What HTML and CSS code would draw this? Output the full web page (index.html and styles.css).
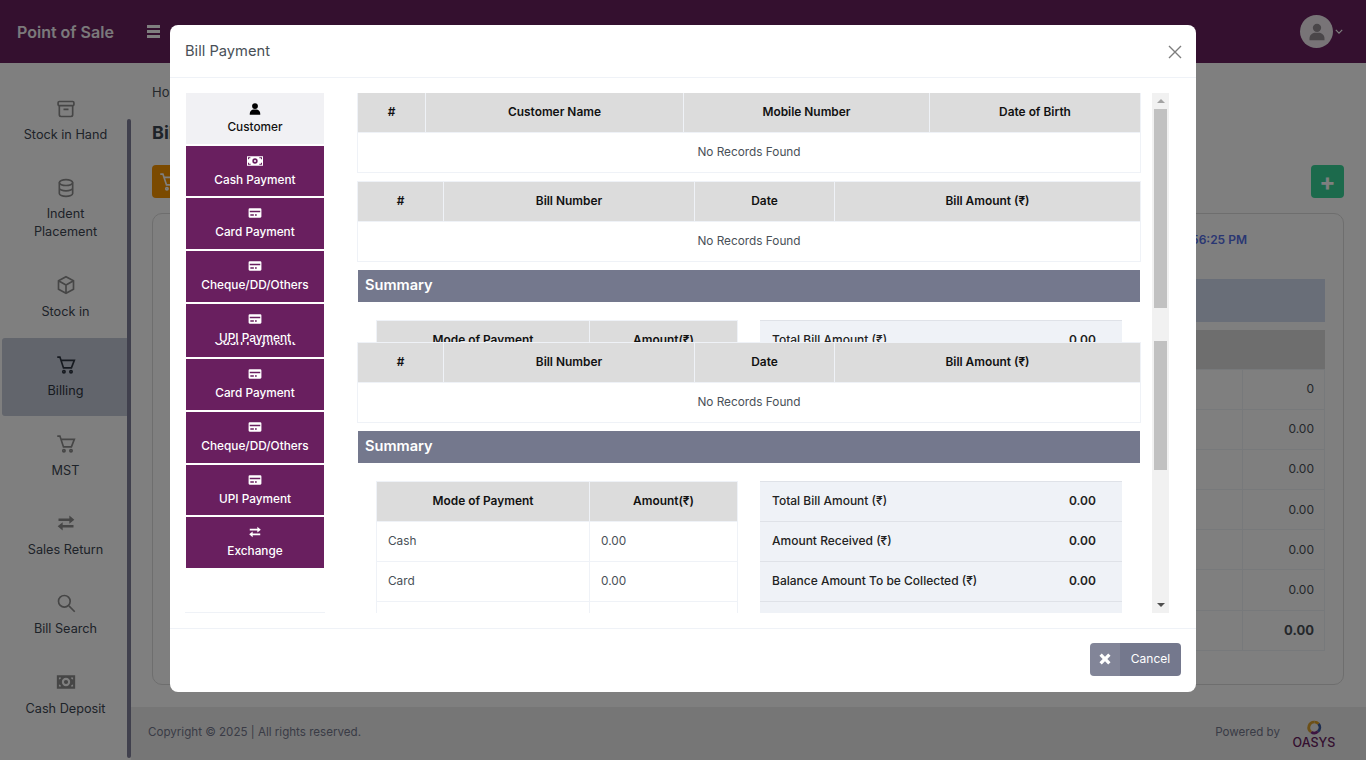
FILE: index.html
```html
<!DOCTYPE html>
<html lang="en">
<head>
  <meta charset="UTF-8">
  <meta name="viewport" content="width=device-width, initial-scale=1.0">
  <title>Point of Sale</title>
  <link rel="stylesheet" href="styles.css">
</head>
<body>
  <svg class="sprite" aria-hidden="true">
    <symbol id="i-user" viewBox="0 0 24 24"><circle cx="12" cy="7" r="5"/><path d="M3 22v-2c0-4 3-7 7-7h4c4 0 7 3 7 7v2z"/></symbol>
    <symbol id="i-cash" viewBox="0 0 24 18"><path fill-rule="evenodd" d="M0 2h24v14H0zM12 5a4 4 0 1 0 0 8 4 4 0 0 0 0-8zM12 7.5a1.500 1.500 0 1 1 0 3 1.500 1.500 0 0 1 0-3zM1.500 3.500v3H3V5h2V3.500zM22.500 3.500h-4V5h2.500v1.500h1.500zM1.500 14.500h4V13H3v-1.500H1.500zM22.500 14.500v-3H21V13h-2.500v1.500z"/></symbol>
    <symbol id="i-card" viewBox="0 0 24 24"><path fill-rule="evenodd" d="M3 4h18a2 2 0 0 1 2 2v12a2 2 0 0 1-2 2H3a2 2 0 0 1-2-2V6a2 2 0 0 1 2-2zm0 4v2.500h18V8zm1 6v2.500h6V14zm8 0v2.500h3V14z"/></symbol>
    <symbol id="i-swap" viewBox="0 0 24 24"><path d="M16 3l6 5-6 5v-3.500H3v-3h13zM8 11v3.500h13v3H8V21l-6-5z"/></symbol>
    <symbol id="i-x" viewBox="0 0 24 24"><path d="M6.500 2.500L12 8l5.500-5.500 4 4L16 12l5.500 5.500-4 4L12 16l-5.500 5.500-4-4L8 12 2.500 6.500z"/></symbol>
    <symbol id="i-archive" viewBox="0 0 24 24"><rect x="2.500" y="3" width="19" height="5" rx="1.500"/><path d="M4 8v11a2 2 0 0 0 2 2h12a2 2 0 0 0 2-2V8M9 12.500h6"/></symbol>
    <symbol id="i-db" viewBox="0 0 24 24"><ellipse cx="12" cy="5.500" rx="8" ry="3.500"/><path d="M4 5.500v13c0 1.900 3.600 3.500 8 3.500s8-1.600 8-3.500v-13M4 12c0 1.900 3.600 3.500 8 3.500s8-1.600 8-3.500"/></symbol>
    <symbol id="i-box" viewBox="0 0 24 24"><path d="M12 2l9 5v10l-9 5-9-5V7zM3 7l9 5 9-5M12 12v10"/></symbol>
    <symbol id="i-cart" viewBox="0 0 24 24"><path d="M1.500 2.500h3.200L9 15.500h9.500L22 6.500H6.200"/><circle cx="9.500" cy="20" r="1.400" class="solid"/><circle cx="18" cy="20" r="1.400" class="solid"/></symbol>
    <symbol id="i-search" viewBox="0 0 24 24"><circle cx="10" cy="10" r="7"/><path d="M15.500 15.500l7 7"/></symbol>
    <symbol id="i-note" viewBox="0 0 24 24"><path fill-rule="evenodd" d="M1 4h22v16H1zm11 3a5 5 0 1 0 0 10 5 5 0 0 0 0-10zm0 2.500a2.500 2.500 0 1 1 0 5 2.500 2.500 0 0 1 0-5zM3.500 6.500V9a2.500 2.500 0 0 0 2.500-2.500zm17 0H18A2.500 2.500 0 0 0 20.500 9zm-17 11H6A2.500 2.500 0 0 0 3.500 15zm17 0V15a2.500 2.500 0 0 0-2.500 2.500z"/></symbol>
  </svg>

  <header class="topbar">
    <div class="brand">Point of Sale</div>
    <div class="burger"><span></span><span></span><span></span></div>
    <div class="account">
      <div class="avatar"><svg class="avatar-icon"><use href="#i-user"/></svg></div>
      <svg class="chevron" viewBox="0 0 10 6"><path d="M1 1l4 4 4-4"/></svg>
    </div>
  </header>

  <div class="page">
    <nav class="sidebar">
      <a class="nav-item"><svg class="line-icon"><use href="#i-archive"/></svg><span>Stock in Hand</span></a>
      <a class="nav-item"><svg class="line-icon"><use href="#i-db"/></svg><span>Indent<br>Placement</span></a>
      <a class="nav-item"><svg class="line-icon"><use href="#i-box"/></svg><span>Stock in</span></a>
      <a class="nav-item active"><svg class="line-icon"><use href="#i-cart"/></svg><span>Billing</span></a>
      <a class="nav-item"><svg class="line-icon"><use href="#i-cart"/></svg><span>MST</span></a>
      <a class="nav-item"><svg class="fill-icon"><use href="#i-swap"/></svg><span>Sales Return</span></a>
      <a class="nav-item"><svg class="line-icon"><use href="#i-search"/></svg><span>Bill Search</span></a>
      <a class="nav-item"><svg class="fill-icon"><use href="#i-note"/></svg><span>Cash Deposit</span></a>
      <div class="side-thumb"></div>
    </nav>

    <div class="main">
      <div class="content">
        <div class="crumb">Home</div>
        <h1 class="page-title">Billing</h1>
        <div class="actions">
          <button class="btn-orange"><svg class="line-icon"><use href="#i-cart"/></svg></button>
          <button class="btn-green">+</button>
        </div>
        <div class="card">
          <div class="clock">12:56:25 PM</div>
          <div class="card-bar"></div>
          <table class="bill-table">
            <tr><th></th><th></th></tr>
            <tr><td></td><td>0</td></tr>
            <tr><td></td><td>0.00</td></tr>
            <tr><td></td><td>0.00</td></tr>
            <tr><td></td><td>0.00</td></tr>
            <tr><td></td><td>0.00</td></tr>
            <tr><td></td><td>0.00</td></tr>
            <tr><td></td><td><b>0.00</b></td></tr>
          </table>
        </div>
      </div>
      <footer class="footer">
        <div>Copyright © 2025 | All rights reserved.</div>
        <div class="powered">
          <span class="powered-label">Powered by</span>
          <div class="logo">
            <svg class="logo-ring" viewBox="0 0 20 20">
              <path d="M10 2a8 8 0 0 1 6 2.700l-2.500 2A5 5 0 0 0 10 5z" fill="#e0a020"/>
              <path d="M16 4.700A8 8 0 0 1 15 16l-2-2.400a5 5 0 0 0 .5-6.900z" fill="#3a5aa0"/>
              <path d="M15 16a8 8 0 0 1-10 .5L7 14a5 5 0 0 0 6-.4z" fill="#7a2a80"/>
              <path d="M5 16.500A8 8 0 0 1 10 2v3a5 5 0 0 0-3 9z" fill="#d8a030"/>
            </svg>
            <span>OASYS</span>
          </div>
        </div>
      </footer>
    </div>
  </div>

  <div class="backdrop">
    <div class="modal">
      <div class="modal-head">
        <h5>Bill Payment</h5>
        <svg class="close" viewBox="0 0 14 14"><path d="M1 1l12 12M13 1L1 13"/></svg>
      </div>

      <div class="modal-body">
        <div class="pane">
          <!-- top part of the capture, list at its first scroll position -->
          <div class="slice slice-top">
            <div class="tab-col">
              <a class="tab current"><svg class="tab-icon"><use href="#i-user"/></svg>Customer</a>
              <a class="tab"><svg class="tab-icon"><use href="#i-cash"/></svg>Cash Payment</a>
              <a class="tab"><svg class="tab-icon"><use href="#i-card"/></svg>Card Payment</a>
              <a class="tab"><svg class="tab-icon"><use href="#i-card"/></svg>Cheque/DD/Others</a>
              <a class="tab"><svg class="tab-icon"><use href="#i-card"/></svg>UPI Payment</a>
            </div>
            <div class="data-col">
              <table class="grid grid-customer">
                <tr><th>#</th><th>Customer Name</th><th>Mobile Number</th><th>Date of Birth</th></tr>
                <tr><td colspan="4" class="empty">No Records Found</td></tr>
              </table>
              <table class="grid grid-bills">
                <tr><th>#</th><th>Bill Number</th><th>Date</th><th>Bill Amount (₹)</th></tr>
                <tr><td colspan="4" class="empty">No Records Found</td></tr>
              </table>
              <div class="summary-bar">Summary</div>
              <div class="summary">
                <table class="grid grid-mode">
                  <tr><th>Mode of Payment</th><th>Amount(₹)</th></tr>
                </table>
                <table class="grid grid-total">
                  <tr><td>Total Bill Amount (₹)</td><td>0.00</td></tr>
                </table>
              </div>
            </div>
          </div>

          <!-- lower part, same list scrolled down -->
          <div class="slice slice-low">
            <div class="tab-col">
              <a class="tab current"><svg class="tab-icon"><use href="#i-user"/></svg>Customer</a>
              <a class="tab"><svg class="tab-icon"><use href="#i-cash"/></svg>Cash Payment</a>
              <a class="tab"><svg class="tab-icon"><use href="#i-card"/></svg>Card Payment</a>
              <a class="tab"><svg class="tab-icon"><use href="#i-card"/></svg>Cheque/DD/Others</a>
              <a class="tab"><svg class="tab-icon"><use href="#i-card"/></svg>UPI Payment</a>
              <a class="tab"><svg class="tab-icon tab-icon-swap"><use href="#i-swap"/></svg>Exchange</a>
            </div>
            <div class="data-col">
              <table class="grid grid-customer">
                <tr><th>#</th><th>Customer Name</th><th>Mobile Number</th><th>Date of Birth</th></tr>
                <tr><td colspan="4" class="empty">No Records Found</td></tr>
              </table>
              <table class="grid grid-bills">
                <tr><th>#</th><th>Bill Number</th><th>Date</th><th>Bill Amount (₹)</th></tr>
                <tr><td colspan="4" class="empty">No Records Found</td></tr>
              </table>
              <div class="summary-bar">Summary</div>
              <div class="summary">
                <table class="grid grid-mode">
                  <tr><th>Mode of Payment</th><th>Amount(₹)</th></tr>
                  <tr><td>Cash</td><td>0.00</td></tr>
                  <tr><td>Card</td><td>0.00</td></tr>
                  <tr><td>Cheque</td><td>0.00</td></tr>
                </table>
                <table class="grid grid-total">
                  <tr><td>Total Bill Amount (₹)</td><td>0.00</td></tr>
                  <tr><td>Amount Received (₹)</td><td>0.00</td></tr>
                  <tr><td>Balance Amount To be Collected (₹)</td><td>0.00</td></tr>
                  <tr><td>Change</td><td>0.00</td></tr>
                </table>
              </div>
            </div>
          </div>
        </div>

        <div class="scrollbar">
          <div class="arrow arrow-up"></div>
          <div class="thumb thumb-a"></div>
          <div class="track-gap"></div>
          <div class="thumb thumb-b"></div>
          <div class="track-rest"></div>
          <div class="arrow arrow-down"></div>
        </div>
      </div>

      <div class="modal-foot">
        <button class="btn-cancel">
          <span class="btn-cancel-icon"><svg class="cancel-x"><use href="#i-x"/></svg></span>
          <span class="btn-cancel-label">Cancel</span>
        </button>
      </div>
    </div>
  </div>
</body>
</html>
```

FILE: styles.css
```css
* {
  box-sizing: border-box;
}

body {
  font-family: Inter, "Liberation Sans", sans-serif;
  font-size: 13px;
  color: #495057;
  background-color: #fff;
  margin: 0;
  height: 760px;
  overflow: hidden;
}

.sprite {
  display: none;
}

/* page behind the dialog */
.topbar {
  height: 63px;
  background-color: #68205e;
  display: flex;
  align-items: center;
  padding-left: 17px;
}

.brand {
  width: 130px;
  font-size: 16px;
  font-weight: 600;
  color: #fff;
  opacity: .95;
}

.burger {
  width: 13px;
  display: flex;
  flex-direction: column;
  gap: 2px;
}

.burger span {
  height: 3px;
  background-color: #fff;
}

.account {
  margin-left: auto;
  margin-right: 23px;
  display: flex;
  align-items: center;
  gap: 2px;
}

.avatar {
  width: 33px;
  height: 33px;
  border-radius: 50%;
  background-color: #fff;
  opacity: .9;
  display: flex;
  align-items: center;
  justify-content: center;
}

.avatar-icon {
  width: 20px;
  height: 20px;
  fill: #999;
}

.chevron {
  width: 8px;
  height: 5px;
  fill: none;
  stroke: #fff;
  stroke-width: 1.5;
}

.page {
  display: flex;
  height: 697px;
}

.sidebar {
  position: relative;
  width: 131px;
  flex: none;
  padding-top: 19px;
}

.nav-item {
  width: 131px;
  padding: 16.5px 0 17.4px;
  display: flex;
  flex-direction: column;
  align-items: center;
  gap: 7.5px;
  text-align: center;
  font-size: 12.7px;
  line-height: 18px;
  color: #3d4652;
}

.nav-item.active {
  background-color: #c4cad8;
  margin-left: 2px;
  margin-bottom: 1.4px;
  width: 129px;
  padding-right: 2px;
  padding-bottom: 16px;
  border-radius: 3px;
  color: #2d3440;
}

.line-icon,
.fill-icon {
  width: 20px;
  height: 20px;
  flex: none;
}

.line-icon {
  fill: none;
  stroke: #8c8c8c;
  stroke-width: 2;
}

.fill-icon {
  fill: #8c8c8c;
}

.active .line-icon {
  stroke: #2d3440;
}

.line-icon .solid {
  fill: #8c8c8c;
}

.side-thumb {
  position: absolute;
  left: 127px;
  top: 56px;
  width: 4px;
  height: 639px;
  border-radius: 2px;
  background-color: #80809a;
}

.main {
  flex: 1;
  display: flex;
  flex-direction: column;
}

.content {
  flex: 1;
  padding: 21px 22px 0 21px;
}

.crumb {
  line-height: 16px;
}

.page-title {
  font-size: 18px;
  font-weight: 700;
  margin: 21px 0 0;
  line-height: 24px;
  color: #3d4652;
}

.actions {
  display: flex;
  justify-content: space-between;
  margin-top: 20px;
}

.actions button {
  width: 33px;
  height: 33px;
  border: 0;
  border-radius: 4px;
  padding: 0;
  display: flex;
  align-items: center;
  justify-content: center;
}

.btn-orange {
  background-color: #f79400;
}

.btn-orange .line-icon {
  stroke: #fff;
}

.btn-green {
  background-color: #38d498;
  color: #fff;
  font-family: inherit;
  font-size: 24px;
  font-weight: 700;
}

.card {
  margin-top: 15px;
  height: 472px;
  border: 1px solid #dcdcdc;
  border-radius: 10px;
  padding: 0 18px;
}

.clock {
  margin-top: 17px;
  margin-right: 78px;
  text-align: right;
  font-size: 12px;
  line-height: 18px;
  font-weight: 600;
  color: #556ee6;
}

.card-bar {
  height: 43px;
  margin-top: 30px;
  background-color: #d2dcf0;
}

.bill-table {
  width: 100%;
  margin-top: 8px;
  border-collapse: collapse;
}

.bill-table th {
  height: 39px;
  background-color: #dcdcdc;
}

.bill-table td {
  height: 40.2px;
  padding: 0 10px 1px;
  border: 1px solid #eff2f7;
  text-align: right;
  font-size: 12px;
}

.bill-table b {
  font-size: 13px;
}

.bill-table td:last-child,
.bill-table th:last-child {
  width: 82px;
}

.footer {
  height: 53px;
  flex: none;
  background-color: #ececec;
  display: flex;
  align-items: center;
  justify-content: space-between;
  padding: 0 31px 3px 17px;
  font-size: 11.6px;
  color: #74788d;
}

.powered {
  display: flex;
  align-items: center;
  gap: 13px;
  padding-top: 3px;
}

.powered-label {
  margin-bottom: 4px;
}

.logo {
  width: 42px;
  display: flex;
  flex-direction: column;
  align-items: center;
  font-size: 12.5px;
  line-height: 13px;
  font-weight: 500;
  color: #68205e;
}

.logo-ring {
  width: 17px;
  height: 17px;
}

/* dialog */
.backdrop {
  position: fixed;
  top: 0;
  left: 0;
  right: 0;
  bottom: 0;
  background-color: rgba(0, 0, 0, .5);
  padding-top: 25px;
}

.modal {
  width: 1026px;
  height: 667px;
  margin-left: 170px;
  background-color: #fff;
  border-radius: 8px;
  display: flex;
  flex-direction: column;
}

.modal-head {
  height: 53px;
  flex: none;
  border-bottom: 1px solid #eff2f7;
  display: flex;
  align-items: center;
  justify-content: space-between;
  padding: 0 14px 1px 15px;
}

.modal-head h5 {
  margin: 0;
  font-size: 14.7px;
  font-weight: 400;
  color: #495057;
}

.close {
  width: 14px;
  height: 14px;
  margin-top: 3px;
  fill: none;
  stroke: #7d7d7d;
  stroke-width: 1.4;
}

.modal-body {
  height: 550px;
  flex: none;
  padding: 15px 27px 15px 15px;
  display: flex;
  gap: 11px;
}

.pane {
  flex: 1;
  display: flex;
  flex-direction: column;
}

.slice {
  display: flex;
  gap: 32px;
  overflow: hidden;
  flex: none;
}

.slice-top {
  height: 249px;
}

.slice-low {
  height: 271px;
}

.slice-top .data-col {
  margin-top: -1px;
}

.slice-low .tab-col {
  margin-top: -88px;
}

.slice-low .data-col {
  margin-top: -89px;
}

.tab-col {
  width: 140px;
  flex: none;
  padding-right: 1px;
  padding-left: 1px;
  height: 359px;
}

.slice-low .tab-col {
  border-bottom: 1px solid #eff2f7;
}

.tab {
  height: 50.67px;
  margin-bottom: 2px;
  background-color: #691f5f;
  color: #fff;
  font-size: 11.8px;
  font-weight: 500;
  display: flex;
  flex-direction: column;
  align-items: center;
  justify-content: flex-start;
  padding-top: 8px;
  line-height: 16px;
  gap: 4px;
}

.tab.current {
  background-color: #f1f1f4;
  color: #111;
  padding-top: 9px;
  gap: 3px;
}

.tab-icon {
  width: 16px;
  height: 14px;
  fill: #fff;
}

.tab-icon-swap {
  width: 14px;
}

.current .tab-icon {
  fill: #000;
}

.data-col {
  width: 784px;
  flex: none;
}

.grid {
  width: 100%;
  border-collapse: collapse;
  table-layout: fixed;
  margin-bottom: 8px;
}

.grid th,
.grid td {
  height: 40px;
  padding: 0 11px;
  border: 1px solid #eff2f7;
  font-size: 11.8px;
  line-height: 19px;
}

.grid th {
  background-color: #dcdcdc;
  color: #111;
  font-size: 11.9px;
  font-weight: 600;
  text-align: center;
  padding-bottom: 2px;
}

.empty {
  text-align: center;
}

.grid-customer th:nth-child(1) { width: 68px; }
.grid-customer th:nth-child(2) { width: 258px; }
.grid-customer th:nth-child(3) { width: 246px; }

.grid-bills th:nth-child(1) { width: 86px; }
.grid-bills th:nth-child(2) { width: 251px; }
.grid-bills th:nth-child(3) { width: 140px; }

.summary-bar {
  height: 32px;
  margin: 0 1px 18px;
  background-color: #74788d;
  color: #fff;
  font-size: 14.6px;
  font-weight: 600;
  line-height: 30px;
  padding-left: 7px;
}

.summary {
  display: flex;
  gap: 22px;
  padding: 0 18px 0 19px;
}

.summary .grid {
  width: 362px;
  flex: none;
}

.grid-mode th:first-child {
  width: 213px;
}

.grid-total td {
  background-color: #eff2f7;
  border-color: #dfe2e8;
  border-left: 0;
  border-right: 0;
  padding: 0 12px 2px;
  color: #222;
  font-size: 12px;
  font-weight: 500;
}

.grid-total td:last-child {
  width: 65px;
  font-weight: 600;
}

.scrollbar {
  width: 17px;
  flex: none;
  background-color: #f1f1f1;
  display: flex;
  flex-direction: column;
  align-items: center;
}

.arrow {
  width: 100%;
  height: 16px;
  flex: none;
  display: flex;
  align-items: center;
  justify-content: center;
}

.arrow::before {
  content: "";
  border-left: 4px solid transparent;
  border-right: 4px solid transparent;
}

.arrow-up::before {
  border-bottom: 4px solid #a3a3a3;
}

.arrow-down::before {
  border-top: 4px solid #505050;
}

.thumb {
  width: 13px;
  flex: none;
  background-color: #c1c1c1;
}

.thumb-a {
  height: 199px;
}

.track-gap {
  height: 33px;
  flex: none;
}

.thumb-b {
  height: 129px;
}

.track-rest {
  flex: 1;
}

.modal-foot {
  flex: 1;
  border-top: 1px solid #eff2f7;
  display: flex;
  justify-content: flex-end;
  align-items: flex-start;
  padding: 14px 15px 0 0;
}

.btn-cancel {
  height: 33px;
  width: 91px;
  border: 0;
  border-radius: 4px;
  padding: 0;
  background-color: #74788d;
  color: #fff;
  font-family: inherit;
  font-size: 12px;
  display: flex;
  overflow: hidden;
}

.btn-cancel-icon {
  width: 30px;
  height: 100%;
  background-color: rgba(255, 255, 255, .1);
  display: flex;
  align-items: center;
  justify-content: center;
}

.cancel-x {
  width: 14px;
  height: 14px;
  margin-bottom: 1px;
  fill: #fff;
}

.btn-cancel-label {
  flex: 1;
  line-height: 32px;
  text-align: center;
}
```
